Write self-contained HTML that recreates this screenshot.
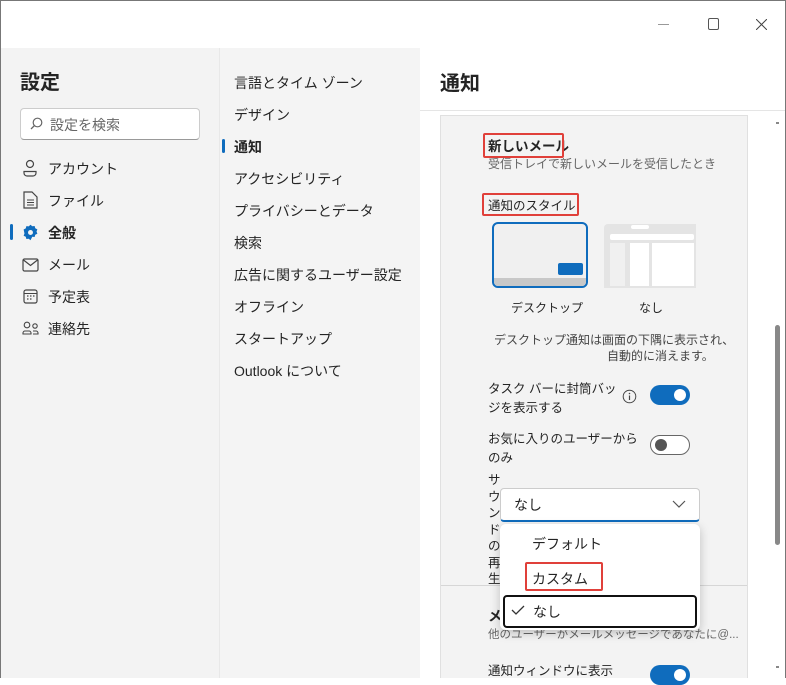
<!DOCTYPE html>
<html><head><meta charset="utf-8"><style>
*{margin:0;padding:0;box-sizing:border-box}
body{width:786px;height:678px;overflow:hidden;background:#fff;font-family:"Liberation Sans","Noto Sans CJK JP",sans-serif;color:#242424;position:relative}
.a{position:absolute;white-space:nowrap}
.win{position:absolute;left:0;top:0;width:786px;height:678px;border:1px solid #777;border-bottom:none}
.t14{font-size:14px}
.red{position:absolute;border:2.5px solid #e0403a;border-radius:2px}
.tog{position:absolute;width:40px;height:20px;border-radius:10px}
</style></head><body>
<div class="a" style="left:1px;top:48px;width:218px;height:630px;background:#f3f3f3"></div>
<div class="a" style="left:219px;top:48px;width:1px;height:630px;background:#e8e8e8"></div>
<div class="a" style="left:220px;top:48px;width:200px;height:630px;background:#f4f4f4"></div>
<div class="a" style="left:420px;top:110px;width:366px;height:1px;background:#e5e5e5"></div>
<div class="a" style="left:440px;top:115px;width:308px;height:563px;background:#f3f3f3;border:1px solid #e0e0e0;border-bottom:none"></div>
<div class="a" style="left:441px;top:585px;width:306px;height:1px;background:#d6d6d6"></div>
<div class="a" style="left:658px;top:24px;width:11px;height:1px;background:#999"></div>
<div class="a" style="left:708px;top:18px;width:11px;height:12px;border:1px solid #555;border-radius:2px"></div>
<svg class="a" style="left:756px;top:19px" width="11" height="11"><path d="M0 0L11 11M11 0L0 11" stroke="#444" stroke-width="1"/></svg>
<div class="a" style="left:20px;top:66px;font-size:20px;font-weight:bold">設定</div>
<div class="a" style="left:20px;top:108px;width:180px;height:32px;background:#fff;border:1px solid #ccc;border-bottom-color:#999;border-radius:4px"></div>
<svg class="a" style="left:30px;top:117px" width="14" height="14"><circle cx="7.5" cy="5.5" r="4.3" fill="none" stroke="#666" stroke-width="1.2"/><path d="M4.5 8.5L1 12" stroke="#666" stroke-width="1.3"/></svg>
<div class="a t14" style="left:50px;top:115px;color:#666">設定を検索</div>
<svg class="a" style="left:22px;top:159px" width="18" height="18"><circle cx="8" cy="5" r="3.5" fill="none" stroke="#444" stroke-width="1.2"/><path d="M2 12.5h12v1.5a3 3 0 0 1-3 3h-6a3 3 0 0 1-3-3z" fill="none" stroke="#444" stroke-width="1.2"/></svg>
<div class="a t14" style="left:48px;top:159px">アカウント</div>
<svg class="a" style="left:23px;top:191px" width="16" height="18"><path d="M1 1h8l5 5v11H1z" fill="none" stroke="#444" stroke-width="1.2"/><path d="M4 9h7M4 11.5h7M4 14h7" stroke="#444"/></svg>
<div class="a t14" style="left:48px;top:191px">ファイル</div>
<div class="a" style="left:10px;top:224px;width:3px;height:16px;background:#0f6cbd;border-radius:2px"></div>
<svg class="a" style="left:22px;top:224px" width="17" height="17" viewBox="0 0 24 24"><path fill="#0f6cbd" d="M12 1l2.5 2.2 3.3-.4.9 3.2 3 1.5-1.2 3.1 1.2 3.1-3 1.5-.9 3.2-3.3-.4L12 23l-2.5-2.2-3.3.4-.9-3.2-3-1.5 1.2-3.1L2.3 7.7l3-1.5.9-3.2 3.3.4z"/><circle cx="12" cy="12" r="3.5" fill="#f3f3f3"/></svg>
<div class="a t14" style="left:48px;top:223px;font-weight:bold">全般</div>
<svg class="a" style="left:22px;top:257px" width="18" height="16"><rect x="1" y="2" width="15" height="12" rx="1.5" fill="none" stroke="#444" stroke-width="1.2"/><path d="M1.5 3l7 5.5 7-5.5" fill="none" stroke="#444" stroke-width="1.2"/></svg>
<div class="a t14" style="left:48px;top:255px">メール</div>
<svg class="a" style="left:23px;top:289px" width="16" height="16"><rect x="1" y="1" width="13" height="13" rx="2" fill="none" stroke="#444" stroke-width="1.2"/><path d="M1 4.5h13" stroke="#444"/><path d="M4 7h1.5M7 7h1.5M10 7h1.5M4 10h1.5M7 10h1.5" stroke="#444" stroke-width="1.3"/></svg>
<div class="a t14" style="left:48px;top:287px">予定表</div>
<svg class="a" style="left:22px;top:320px" width="18" height="16"><circle cx="5" cy="5" r="2.8" fill="none" stroke="#444" stroke-width="1.1"/><circle cx="13" cy="6" r="2.2" fill="none" stroke="#444" stroke-width="1.1"/><path d="M1 14v-1a2 2 0 0 1 2-2h4a2 2 0 0 1 2 2v1zM11 14h5v-1a2 2 0 0 0-2-2h-3" fill="none" stroke="#444" stroke-width="1.1"/></svg>
<div class="a t14" style="left:48px;top:319px">連絡先</div>
<div class="a t14" style="left:234px;top:73px">言語とタイム ゾーン</div>
<div class="a t14" style="left:234px;top:105px">デザイン</div>
<div class="a" style="left:222px;top:139px;width:3px;height:14px;background:#0f6cbd;border-radius:2px"></div>
<div class="a t14" style="left:234px;top:137px;font-weight:bold">通知</div>
<div class="a t14" style="left:234px;top:169px">アクセシビリティ</div>
<div class="a t14" style="left:234px;top:201px">プライバシーとデータ</div>
<div class="a t14" style="left:234px;top:233px">検索</div>
<div class="a t14" style="left:234px;top:265px">広告に関するユーザー設定</div>
<div class="a t14" style="left:234px;top:297px">オフライン</div>
<div class="a t14" style="left:234px;top:329px">スタートアップ</div>
<div class="a t14" style="left:234px;top:361px">Outlook について</div>
<div class="a" style="left:440px;top:67px;font-size:20px;font-weight:bold">通知</div>
<div class="a" style="left:488px;top:135px;font-size:13.5px;font-weight:bold">新しいメール</div>
<div class="red" style="left:483px;top:133px;width:81px;height:25px"></div>
<div class="a" style="left:488px;top:155px;font-size:12px;color:#666">受信トレイで新しいメールを受信したとき</div>
<div class="a" style="left:488px;top:195px;font-size:12.5px">通知のスタイル</div>
<div class="red" style="left:482px;top:193px;width:97px;height:23px"></div>
<div class="a" style="left:492px;top:222px;width:96px;height:66px;background:#f0f0f0;border:2px solid #0f6cbd;border-radius:6px;overflow:hidden"><div style="position:absolute;left:0;bottom:0;width:100%;height:8px;background:#c8c8c8"></div><div style="position:absolute;left:64px;top:39px;width:25px;height:12px;background:#0f6cbd;border-radius:2px"></div></div>
<div class="a" style="left:604px;top:224px;width:92px;height:64px;background:#e4e4e4;border-radius:4px 0 0 0"><div style="position:absolute;left:27px;top:1px;width:18px;height:4px;background:#fff;border-radius:2px"></div><div style="position:absolute;left:6px;top:10px;width:84px;height:6px;background:#fff;border-radius:2px"></div><div style="position:absolute;left:26px;top:19px;width:19px;height:43px;background:#fff"></div><div style="position:absolute;left:48px;top:19px;width:42px;height:43px;background:#fff"></div><div style="position:absolute;left:6px;top:19px;width:15px;height:43px;background:#f0f0f0"></div></div>
<div class="a" style="left:511px;top:299px;font-size:12px">デスクトップ</div>
<div class="a" style="left:639px;top:299px;font-size:12px">なし</div>
<div class="a" style="left:494px;top:331px;font-size:12px;color:#444">デスクトップ通知は画面の下隅に表示され、</div>
<div class="a" style="left:607px;top:347px;font-size:12px;color:#444">自動的に消えます。</div>
<div class="a" style="left:488px;top:380px;font-size:12.5px;line-height:19px">タスク バーに封筒バッ<br>ジを表示する</div>
<svg class="a" style="left:622px;top:389px" width="15" height="15"><circle cx="7.5" cy="7.5" r="6.3" fill="none" stroke="#444" stroke-width="1"/><path d="M7.5 6.5v4.5" stroke="#444" stroke-width="1.2"/><circle cx="7.5" cy="4.5" r=".8" fill="#444"/></svg>
<div class="tog" style="left:650px;top:385px;background:#0f6cbd"><div style="position:absolute;right:4px;top:4px;width:12px;height:12px;border-radius:6px;background:#fff"></div></div>
<div class="a" style="left:488px;top:430px;font-size:12.5px;line-height:19px">お気に入りのユーザーから<br>のみ</div>
<div class="tog" style="left:650px;top:435px;border:1px solid #666;background:#fff"><div style="position:absolute;left:4px;top:3px;width:12px;height:12px;border-radius:6px;background:#555"></div></div>
<div class="a" style="left:488px;top:472px;font-size:12.5px;line-height:16.5px">サ<br>ウ<br>ン<br>ド<br>の<br>再<br>生</div>
<div class="a" style="left:500px;top:488px;width:200px;height:34px;background:#fff;border:1px solid #ccc;border-bottom:2px solid #0f6cbd;border-radius:4px"></div>
<div class="a" style="left:514px;top:495px;font-size:14px">なし</div>
<svg class="a" style="left:672px;top:500px" width="14" height="8"><path d="M1 1l6 6 6-6" fill="none" stroke="#555" stroke-width="1.2"/></svg>
<div class="a" style="left:488px;top:606px;font-size:14px;font-weight:bold">メ</div>
<div class="a" style="left:488px;top:626px;font-size:11.5px;color:#666">他のユーザーがメールメッセージであなたに@...</div>
<div class="a" style="left:488px;top:660px;font-size:12.5px">通知ウィンドウに表示</div>
<div class="tog" style="left:650px;top:665px;background:#0f6cbd"><div style="position:absolute;right:4px;top:4px;width:12px;height:12px;border-radius:6px;background:#fff"></div></div>
<div class="a" style="left:500px;top:524px;width:200px;height:106px;background:#fff;border-radius:6px;box-shadow:0 3px 10px rgba(0,0,0,.22)"></div>
<div class="a" style="left:532px;top:534px;font-size:14px">デフォルト</div>
<div class="a" style="left:532px;top:569px;font-size:14px">カスタム</div>
<div class="red" style="left:525px;top:562px;width:78px;height:29px"></div>
<div class="a" style="left:503px;top:595px;width:194px;height:33px;border:2px solid #111;border-radius:4px"></div>
<svg class="a" style="left:511px;top:605px" width="14" height="10"><path d="M1 5l4 4 8-8" fill="none" stroke="#333" stroke-width="1.3"/></svg>
<div class="a" style="left:533px;top:602px;font-size:14px">なし</div>
<div class="a" style="left:776px;top:122px;width:3px;height:2px;background:#888"></div>
<div class="a" style="left:775px;top:325px;width:5px;height:220px;background:#888;border-radius:3px"></div>
<div class="a" style="left:776px;top:666px;width:3px;height:2px;background:#888"></div>
<div class="win"></div>
</body></html>
